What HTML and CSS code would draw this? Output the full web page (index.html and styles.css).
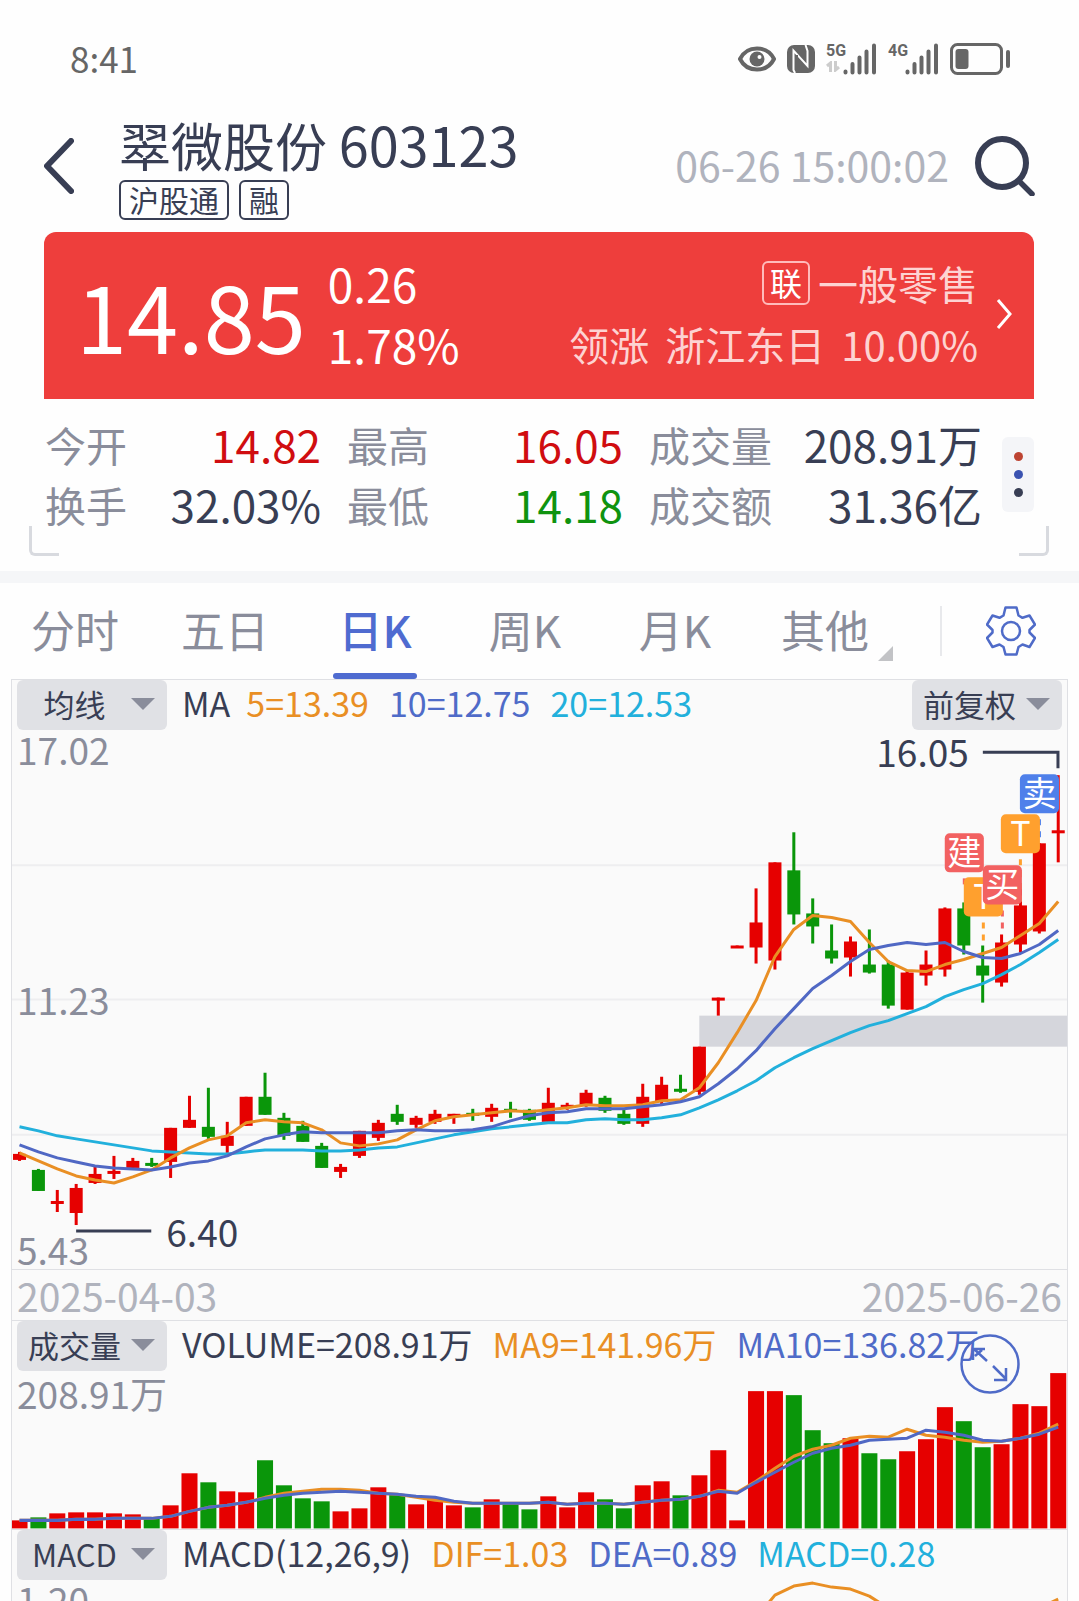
FILE: index.html
```html
<!DOCTYPE html>
<html lang="zh-CN">
<head>
  <meta charset="UTF-8">
  <title>翠微股份 603123</title>
  <meta name="viewport" content="width=device-width, initial-scale=1">
  <link rel="stylesheet" href="styles.css">
</head>
<body>
  <div class="status">
    <span class="clock">8:41</span>
    <div class="status-icons">
      <svg width="38" height="26" viewBox="0 0 38 26">
        <path d="M2 13C9 -1 29 -1 36 13C29 27 9 27 2 13Z" fill="none" stroke="#666" stroke-width="4"/>
        <circle cx="19" cy="13" r="7.5" fill="#666"/>
        <circle cx="21.500" cy="11" r="2" fill="#fff"/>
      </svg>
      <svg width="28" height="28" viewBox="0 0 28 28">
        <rect width="28" height="28" rx="7" fill="#666"/>
        <path d="M8 28L6.500 25V5.500L20.500 21V6L18.500 0" fill="none" stroke="#fff" stroke-width="2"/>
        <path d="M9.500 10V22M17.500 5V13" fill="none" stroke="#666" stroke-width="3"/>
      </svg>
      <div class="signal">
        <span class="net">5G</span>
        <svg class="updown" width="14" height="11" viewBox="0 0 14 11"><path d="M1 5L4.500 2V11M9.500 0V9L13 6" fill="none" stroke="#ccc" stroke-width="3"/></svg>
        <svg class="bars" width="34" height="32" viewBox="0 0 34 32"><path d="M2.500 28.500V29.500M9.500 21V29.500M16.500 14.500V29.500M23.500 8.500V29.500M31 2.500V29.500" stroke="#666" stroke-width="4" stroke-linecap="round"/></svg>
      </div>
      <div class="signal">
        <span class="net">4G</span>
        <svg class="bars" width="34" height="32" viewBox="0 0 34 32"><path d="M2.500 28.500V29.500M9.500 21V29.500M16.500 14.500V29.500M23.500 8.500V29.500M31 2.500V29.500" stroke="#666" stroke-width="4" stroke-linecap="round"/></svg>
      </div>
      <svg width="60" height="32" viewBox="0 0 60 32">
        <rect x="1.500" y="1.500" width="50" height="29" rx="6" fill="none" stroke="#666" stroke-width="3"/>
        <rect x="5.500" y="6" width="13" height="20" rx="3" fill="#666"/>
        <rect x="56" y="7" width="4" height="18" rx="2" fill="#666"/>
      </svg>
    </div>
  </div>

  <header class="header">
    <button class="icon-btn back" aria-label="返回">
      <svg width="30" height="56" viewBox="0 0 30 56"><path d="M27 3L3 28L27 53" fill="none" stroke="#383e54" stroke-width="6" stroke-linecap="round" stroke-linejoin="round"/></svg>
    </button>
    <div class="title">
      <h1>翠微股份 <span class="code">603123</span></h1>
      <div class="tags"><span class="tag">沪股通</span><span class="tag">融</span></div>
    </div>
    <time class="time">06-26 15:00:02</time>
    <button class="icon-btn" aria-label="搜索">
      <svg width="60" height="60" viewBox="0 0 60 60"><circle cx="27" cy="27" r="24" fill="none" stroke="#383e54" stroke-width="6"/><path d="M44 45L57 58" stroke="#383e54" stroke-width="5.500" stroke-linecap="round"/></svg>
    </button>
  </header>

  <section class="quote">
    <strong class="price">14.85</strong>
    <div class="change"><span>0.26</span><span>1.78%</span></div>
    <a class="sector" href="#sector">
      <span class="sector-text">
        <span class="sector-row"><span class="lian">联</span>一般零售</span>
        <span class="sector-row lead"><span>领涨</span><span>浙江东日</span><span>10.00%</span></span>
      </span>
      <svg width="16" height="32" viewBox="0 0 16 32"><path d="M2 2L14 16L2 30" fill="none" stroke="#fff" stroke-width="3"/></svg>
    </a>
  </section>

  <section class="stats">
    <dl class="stat-grid">
      <div><dt>今开</dt><dd class="up">14.82</dd></div>
      <div><dt>最高</dt><dd class="up">16.05</dd></div>
      <div><dt>成交量</dt><dd>208.91万</dd></div>
      <div><dt>换手</dt><dd>32.03%</dd></div>
      <div><dt>最低</dt><dd class="down">14.18</dd></div>
      <div><dt>成交额</dt><dd>31.36亿</dd></div>
    </dl>
    <button class="more" aria-label="更多"><i></i><i></i><i></i></button>
  </section>

  <nav class="tabs">
    <button class="tab">分时</button>
    <button class="tab">五日</button>
    <button class="tab active">日K</button>
    <button class="tab">周K</button>
    <button class="tab">月K</button>
    <button class="tab other">其他</button>
    <button class="icon-btn settings" aria-label="设置">
      <svg width="50" height="50" viewBox="0 0 50 50">
        <g fill="none" stroke="#4f6bc8" stroke-width="2.500" stroke-linejoin="round">
          <path d="M19.500 1.500H30.500L32.500 9.500L36.500 11.800L43.500 9.500L49 18.500L43.500 24V26.500L49 32L43.500 41L36.500 38.500L32.500 41L30.500 48.500H19.500L17.500 41L13.500 38.500L6.500 41L1 32L6.500 26.500V24L1 18.500L6.500 9.500L13.500 11.800L17.500 9.500Z"/>
          <circle cx="25" cy="25" r="9"/>
        </g>
      </svg>
    </button>
  </nav>

  <main class="chart">
    <section class="panel">
      <svg class="plot" viewBox="0 -4 1053 588">
        <path class="grid" d="M0 181H1053M0 315H1053M0 450H1053"/>
        <rect class="gap" x="686" y="331" width="367" height="31"/>
        <g id="candles"></g>
        <g id="priceLines"></g>
        <path class="callout" d="M969 68H1044V84M64 546H139"/>
        <text class="mark-label" x="955" y="83" text-anchor="end">16.05</text>
        <text class="mark-label" x="154" y="562">6.40</text>
        <text class="axis" x="5" y="81">17.02</text>
        <text class="axis" x="5" y="330">11.23</text>
        <text class="axis" x="5" y="580">5.43</text>
        <g id="marks"></g>
      </svg>
      <div class="legend">
        <span class="pick"><select aria-label="主图指标"><option>均线</option></select></span>
        <span class="name">MA</span><span class="c1">5=13.39</span><span class="c2">10=12.75</span><span class="c3">20=12.53</span>
        <span class="pick right"><select aria-label="复权方式"><option>前复权</option></select></span>
      </div>
    </section>

    <div class="dates"><span>2025-04-03</span><span>2025-06-26</span></div>

    <section class="panel">
      <svg class="plot" viewBox="0 0 1053 207">
        <g id="volume"></g>
        <g id="volumeLines"></g>
        <text class="axis" x="5" y="88">208.91万</text>
      </svg>
      <div class="legend">
        <span class="pick"><select aria-label="副图指标一"><option>成交量</option></select></span>
        <span>VOLUME=208.91万</span><span class="c1">MA9=141.96万</span><span class="c2">MA10=136.82万</span>
      </div>
      <button class="icon-btn expand" aria-label="全屏">
        <svg width="60" height="60" viewBox="0 0 60 60"><g fill="none" stroke="#4f6bc8" stroke-width="2.500"><circle cx="30" cy="30" r="28.500"/><path d="M27 27L14 15M13 26V15H25M15 22L22 16M33 32L46 45M46 34V46H34"/></g></svg>
      </button>
    </section>

    <section class="panel macd">
      <svg class="plot" viewBox="0 0 1053 120">
        <g id="macdLines"></g>
        <text class="axis" x="5" y="85">1.20</text>
      </svg>
      <div class="legend">
        <span class="pick"><select aria-label="副图指标二"><option>MACD</option></select></span>
        <span>MACD(12,26,9)</span><span class="c1">DIF=1.03</span><span class="c2">DEA=0.89</span><span class="c3">MACD=0.28</span>
      </div>
    </section>
  </main>

  <script src="chart.js"></script>
</body>
</html>
```
FILE: styles.css
```css
* {
  box-sizing: border-box;
}
body {
  margin: 0;
  height: 100vh;
  display: flex;
  flex-direction: column;
  overflow: hidden;
  background: #fefefe;
  color: #383e54;
  font-family: "Noto Sans CJK SC", "Noto Sans", sans-serif;
}
button, select {
  font-family: inherit;
  color: inherit;
  border: 0;
  margin: 0;
  padding: 0;
  background: none;
}
.icon-btn {
  display: flex;
}

/* 状态栏 */
.status {
  height: 112px;
  padding: 6px 69px 0 70px;
  display: flex;
  flex-shrink: 0;
  align-items: center;
  justify-content: space-between;
  color: #666;
}
.clock {
  padding-bottom: 4px;
  font-size: 35px;
}
.status-icons {
  display: flex;
  align-items: center;
  gap: 11px;
}
.signal {
  display: grid;
  grid-template-columns: 17px 34px;
  grid-template-rows: 18px 14px;
}
.net {
  font: bold 16px/16px "Roboto", sans-serif;
}
.updown {
  grid-row: 2;
}
.bars {
  grid-column: 2;
  grid-row: 1 / 3;
}

/* 标题 */
.header {
  display: flex;
  flex-shrink: 0;
  align-items: center;
  height: 120px;
  padding: 0 44px 12px;
}
.title {
  flex: 1;
  margin-left: 45px;
}
h1 {
  margin: 0 0 4px;
  font-size: 52px;
  line-height: 62px;
  font-weight: normal;
  white-space: nowrap;
}
.code {
  font-size: 54px;
}
.tags {
  display: flex;
  gap: 10px;
}
.tag {
  height: 40px;
  padding: 0 8px;
  border: 2px solid #383e54;
  border-radius: 6px;
  font-size: 30px;
  line-height: 35px;
}
.time {
  margin-right: 26px;
  padding-bottom: 4px;
  font-size: 41px;
  color: #b0b3bd;
}

/* 报价 */
.quote {
  display: flex;
  flex-shrink: 0;
  align-items: center;
  height: 167px;
  margin: 0 45px 0 44px;
  padding: 0 22px 4px 32px;
  border-radius: 12px 12px 0 0;
  background: #ee3e3c;
  color: #fff;
}
.price {
  font-size: 92px;
  line-height: 100px;
  font-weight: normal;
}
.change {
  display: flex;
  flex-direction: column;
  margin-left: 22px;
  font-size: 46px;
  line-height: 61px;
}
.sector {
  display: flex;
  align-items: center;
  gap: 18px;
  margin-left: auto;
  color: #fff;
  text-decoration: none;
}
.sector-text {
  font-size: 40px;
  line-height: 61px;
  color: #fdd3d2;
}
.sector-row {
  display: flex;
  align-items: center;
  justify-content: flex-end;
  gap: 8px;
}
.lead {
  gap: 16px;
}
.lian {
  height: 44px;
  padding: 0 6px;
  border: 2px solid #fbb;
  border-radius: 6px;
  font-size: 32px;
  line-height: 39px;
  color: #fff;
}

.stats {
  position: relative;
  display: flex;
  flex-shrink: 0;
  align-items: center;
  gap: 20px;
  padding: 15px 45px 37px;
  border-bottom: 12px solid #f5f6f8;
}
.stat-grid {
  flex: 1;
  display: grid;
  grid-template-columns: 276fr 276fr 333fr;
  column-gap: 26px;
  margin: 0;
}
.stat-grid div {
  display: flex;
  justify-content: space-between;
  line-height: 60px;
}
dt {
  font-size: 41px;
  color: #8a8d9b;
}
dd {
  margin: 0;
  font-size: 44px;
}
.up {
  color: #d00d10;
}
.down {
  color: #0f930f;
}
.more {
  width: 32px;
  height: 75px;
  border-radius: 6px;
  background: #f4f5f8;
  display: flex;
  flex-direction: column;
  align-items: center;
  justify-content: center;
  gap: 9px;
}
.more i {
  width: 9px;
  height: 9px;
  border-radius: 50%;
  background: #bd4432;
}
.more i:nth-child(2) {
  background: #3a52b0;
}
.more i:nth-child(3) {
  background: #383e54;
}
.stats::before, .stats::after {
  content: "";
  position: absolute;
  bottom: 15px;
  width: 27px;
  height: 27px;
  border-bottom: 3px solid #d8dadf;
}
.stats::before {
  left: 29px;
  border-left: 3px solid #d8dadf;
  border-radius: 0 0 0 6px;
}
.stats::after {
  right: 30px;
  border-right: 3px solid #d8dadf;
  border-radius: 0 0 6px 0;
}

/* 周期 */
.tabs {
  display: flex;
  flex-shrink: 0;
  align-items: center;
  height: 96px;
}
.tab {
  position: relative;
  flex: 1;
  height: 96px;
  padding-bottom: 4px;
  font-size: 44px;
  color: #8a8d9b;
}
.active {
  color: #4f6bd0;
  font-weight: 500;
}
.active::after {
  content: "";
  position: absolute;
  left: calc(50% - 42px);
  bottom: 0;
  width: 84px;
  height: 6px;
  border-radius: 3px;
  background: #4f6bd0;
}
.other::after {
  content: "";
  position: absolute;
  right: 7px;
  bottom: 18px;
  border-left: 15px solid transparent;
  border-bottom: 15px solid #c2c3c6;
}
.settings {
  margin-left: 40px;
  padding: 0 43px 0 44px;
  border-left: 2px solid #e8e9ec;
}

/* 图表 */
.chart {
  flex: 1;
  min-height: 0;
  display: flex;
  flex-direction: column;
  margin: 0 11px;
  border: 1px solid #dfe0e4;
  border-bottom: 0;
  background: #fafafa;
}
.panel {
  position: relative;
  display: grid;
  flex-shrink: 0;
  align-items: start;
  border-bottom: 1px solid #dfe0e4;
}
.macd {
  flex: 1;
  min-height: 0;
  overflow: hidden;
  border-bottom: 0;
}
.plot {
  display: block;
  grid-area: 1 / 1;
  width: 100%;
}
.legend {
  grid-area: 1 / 1;
  display: flex;
  gap: 20px;
  padding: 0 5px;
  font-size: 34px;
  line-height: 46px;
  white-space: nowrap;
}
.pick {
  position: relative;
  margin-right: -5px;
}
.name {
  margin-right: -4px;
}
.pick.right {
  margin: 0 0 0 auto;
}
.pick select {
  display: block;
  appearance: none;
  width: 150px;
  height: 50px;
  padding: 0 35px 3px 0;
  border-radius: 6px;
  background: #e0e1e5;
  font-size: 31px;
  text-align: center;
  text-align-last: center;
}
.pick::after {
  content: "";
  position: absolute;
  top: 18px;
  right: 12px;
  border: 12px solid transparent;
  border-top-color: #8a8d9b;
  border-bottom: 0;
  pointer-events: none;
}
.c1 {
  color: #e98f24;
}
.c2 {
  color: #4f6bc8;
}
.c3 {
  color: #22b0dc;
}
.dates {
  display: flex;
  flex-shrink: 0;
  justify-content: space-between;
  padding: 0 5px;
  border-bottom: 1px solid #dfe0e4;
  font-size: 39px;
  line-height: 50px;
  color: #b0b3bd;
}
.expand {
  position: absolute;
  right: 47px;
  top: 13px;
}

.plot text {
  font-size: 37px;
}
.axis {
  fill: #8a8d9b;
}
.mark-label {
  fill: #383e54;
}
.grid {
  stroke: #eeeef0;
  stroke-width: 2;
}
.gap {
  fill: #d5d6dc;
}
.callout {
  fill: none;
  stroke: #383e54;
  stroke-width: 3;
}
.plot .mark-text {
  font-size: 34px;
  fill: #fff;
}
```
FILE: chart.js
```js
var RED = '#e60000', GREEN = '#0a960a';
var ORANGE = '#e98f24', BLUE = '#5068c4', CYAN = '#22b0dc';
var STEP = 18.85, START = 7.5;

// 颜色, 最高, 实体上沿, 实体下沿, 最低
var candles = [
  ['r',467,469,475,476], ['g',484,485,506,506], ['r',505,516,518,527], ['r',499,503,528,540],
  ['r',482,489,498,499], ['r',471,486,489,494], ['r',473,476,483,485], ['g',473,478,480,482],
  ['r',443,443,477,493], ['r',411,435,443,443], ['g',403,442,452,454], ['r',437,451,461,468],
  ['r',412,412,441,441], ['g',388,412,430,430], ['g',428,433,451,455], ['g',436,441,457,457],
  ['g',458,461,483,483], ['r',479,482,487,493], ['r',446,446,471,473], ['r',435,438,453,456],
  ['g',420,429,437,440], ['r',431,433,440,443], ['r',425,429,437,439], ['r',429,429,431,439],
  ['g',424,428,431,436], ['r',419,423,432,437], ['g',417,424,426,433], ['g',424,425,435,436],
  ['r',403,418,437,437], ['r',418,420,422,425], ['r',405,408,420,422], ['g',411,413,426,428],
  ['g',424,429,439,440], ['r',399,412,439,442], ['r',392,400,417,421], ['g',390,404,406,408],
  ['r',362,362,407,410], ['r',313,313,315,331], ['r',261,261,263,263], ['r',204,238,263,279],
  ['r',178,178,276,285], ['g',148,186,230,240], ['g',214,229,242,259], ['g',240,266,274,279],
  ['r',252,257,273,292], ['g',245,280,288,289], ['g',276,280,321,324], ['r',286,288,325,325],
  ['r',266,280,291,301], ['r',223,224,285,292], ['g',218,224,261,270], ['g',261,281,291,318],
  ['r',250,258,298,302], ['r',199,221,260,268], ['r',159,159,247,249], ['r',91,146,148,178]
];
var ma5 = [468,476,484,491,495,498,492,485,473,463,455,451,438,435,437,438,445,458,461,459,455,445,436,432,430,428,426,427,425,423,420,421,421,420,416,415,403,378,348,316,272,245,231,233,237,258,277,286,287,280,275,269,263,251,239,217];
var ma10 = [460,467,473,477,481,483,484,485,482,478,476,471,462,454,450,447,448,448,448,448,446,445,446,446,445,442,436,431,428,427,424,424,424,422,420,417,412,399,384,366,344,324,304,291,277,265,261,258,260,258,267,273,274,269,260,246];
var ma20 = [442,446,451,454,457,460,463,466,467,468,469,469,467,465,465,465,466,466,465,463,462,458,454,450,447,444,442,440,438,438,435,434,435,435,433,430,423,415,406,396,383,373,364,356,348,341,336,329,322,312,305,299,290,280,268,255];

var volumes = [8,11,15,16,16,15,14,11,23,55,46,37,36,68,43,30,27,17,20,41,34,24,30,23,21,29,25,19,32,21,36,29,20,43,47,33,53,78,8,137,137,133,98,85,90,75,69,77,89,121,107,81,84,124,122,155];
var vol9 = [8,8,8,9,9,10,10,10,12,17,21,23,26,31,35,37,39,39,38,35,34,31,28,26,25,25,25,25,26,24,25,25,24,26,28,29,32,38,36,47,60,72,79,83,90,92,91,99,93,91,88,86,87,90,95,104];
var vol10 = [8,8,8,9,9,10,10,10,12,17,21,23,26,30,33,35,36,37,36,35,34,32,31,27,25,25,25,25,26,24,25,25,24,26,28,29,32,37,35,46,56,66,75,80,83,88,89,90,98,96,93,88,87,90,94,101];

// 买卖点：文字, 颜色, 左, 上, 虚线终点
var marks = [
  ['建', '#f26161', 931, 149, 206],
  ['T', '#ffa02e', 950, 193, 260],
  ['买', '#f26161', 969, 181, 249],
  ['T', '#ffa02e', 987, 130, 221],
  ['卖', '#4f80ea', 1006, 90, 158]
];

function add(parent, tag, attrs, text) {
  var el = document.createElementNS('http://www.w3.org/2000/svg', tag);
  for (var k in attrs) el.setAttribute(k, attrs[k]);
  if (text) el.textContent = text;
  document.getElementById(parent).appendChild(el);
}

function xAt(i) {
  return START + i * STEP;
}

function line(parent, values, color, first) {
  var points = values.map(function (y, i) {
    return xAt(i + (first || 0)) + ',' + y;
  }).join(' ');
  add(parent, 'polyline', { points: points, fill: 'none', stroke: color, 'stroke-width': 3, 'stroke-linejoin': 'round' });
}

candles.forEach(function (c, i) {
  var color = c[0] === 'r' ? RED : GREEN;
  add('candles', 'rect', { x: xAt(i) - 1.5, y: c[1], width: 3, height: c[4] - c[1], fill: color });
  add('candles', 'rect', { x: xAt(i) - 6.5, y: c[2], width: 13, height: Math.max(c[3] - c[2], 3), fill: color });
});
line('priceLines', ma20, CYAN);
line('priceLines', ma5, ORANGE);
line('priceLines', ma10, BLUE);

// 虚线先画，标签盖在上面
marks.forEach(function (m) {
  var mid = m[2] + 19.5;
  add('marks', 'path', { d: 'M' + mid + ' ' + (m[3] + 45) + 'V' + m[4], stroke: m[1], 'stroke-width': 3, 'stroke-dasharray': '6 6' });
});
marks.forEach(function (m) {
  var mid = m[2] + 19.5;
  add('marks', 'rect', { x: m[2], y: m[3], width: 39, height: 39, rx: 5, fill: m[1] });
  add('marks', 'text', { x: mid, y: m[3] + 32, 'text-anchor': 'middle', 'class': 'mark-text' }, m[0]);
});

volumes.forEach(function (v, i) {
  add('volume', 'rect', { x: xAt(i) - 8, y: 207 - v, width: 16, height: v, fill: candles[i][0] === 'r' ? RED : GREEN });
});
function fromBottom(v) {
  return 207 - v;
}
line('volumeLines', vol9.map(fromBottom), ORANGE);
line('volumeLines', vol10.map(fromBottom), BLUE);

line('macdLines', [88, 65, 56, 53, 57, 59, 66, 78], ORANGE, 39);
line('macdLines', [78, 69], ORANGE, 54);
```
